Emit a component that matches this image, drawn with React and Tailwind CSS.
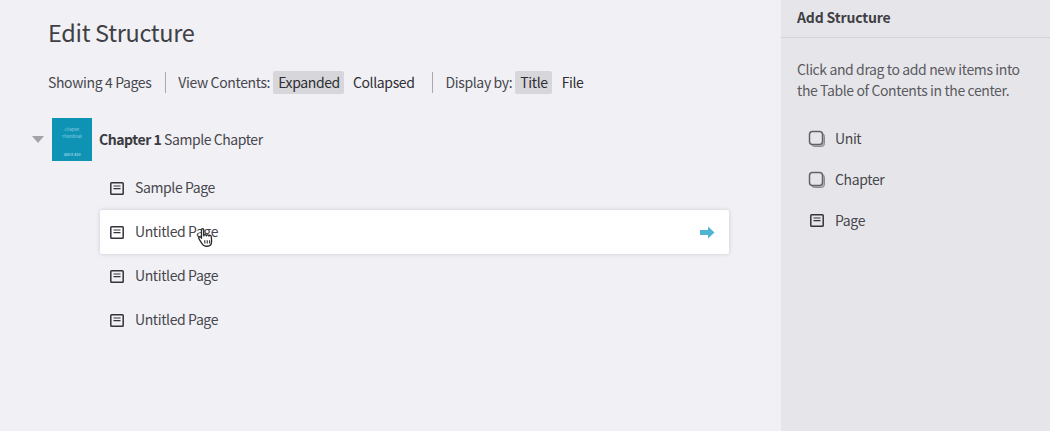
import React from 'react'

function PageIcon() {
    return (
        <svg width="14" height="13" viewBox="0 0 14 13" fill="none" className="shrink-0">
            <rect x="0.8" y="0.8" width="12.4" height="11.4" rx="0.8" stroke="#333338" strokeWidth="1.5" />
            <path d="M3.5 4h7M3.5 6.6h7" stroke="#333338" strokeWidth="1.2" />
        </svg>
    )
}

function StackIcon() {
    return (
        <svg width="18" height="18" viewBox="0 0 18 18" fill="none" className="shrink-0">
            <rect x="3.5" y="3.5" width="13" height="13" rx="3" fill="#b4b4b9" stroke="#8a8a8f" strokeWidth="1" />
            <rect x="1.5" y="1.5" width="13" height="13" rx="3" fill="#e6e6ea" stroke="#626267" strokeWidth="1.5" />
        </svg>
    )
}

function Row({ label, hovered }) {
    return (
        <div className={hovered
            ? 'relative flex h-[44px] items-center rounded-[2px] bg-white pl-[10px] pr-[15px] shadow-[0_0_4px_rgba(0,0,0,0.16)]'
            : 'relative flex h-[44px] items-center pl-[10px] pr-[15px]'}>
            <PageIcon />
            <span className="ml-[11px] mb-[1px] text-[14px] tracking-[-0.39px] text-[#47474d]">{label}</span>
            {hovered && (
                <>
                    <svg width="15" height="13" viewBox="0 0 15 13" className="ml-auto translate-x-[1px]">
                        <path d="M0 4h8V0.5L14.5 6.5 8 12.5V9H0z" fill="#4fb5d3" />
                    </svg>
                    <svg width="20" height="22" viewBox="0 0 18 20" className="absolute left-[97px] top-[17px]" fill="#fff" stroke="#2c2c30" strokeWidth="1.2" strokeLinejoin="round">
                        <path d="M4 2.5c0-1.4 2-1.4 2 0V8c.2-1.4 2.3-1.3 2.4 0 .2-1.2 2.2-1.1 2.3.2.3-1 2.1-.9 2.2.4l.3 4.4c0 2.5-1.5 4.5-4 4.5H8c-1.8 0-2.8-1-3.6-2.3L1.6 10.6c-.7-1.2.9-2.2 1.8-1.2L4 10.2z" />
                        <path d="M7 12v3M9.2 12v3M11.4 12v3" fill="none" strokeWidth="1" />
                    </svg>
                </>
            )}
        </div>
    )
}

function Tool({ icon, label }) {
    return (
        <div className="flex h-[41px] items-center">
            <div className="flex w-[18px] justify-center">{icon}</div>
            <span className="ml-[9px] text-[14px] tracking-[-0.37px] text-[#47474d]">{label}</span>
        </div>
    )
}

export default function App() {
    return (
        <div className="flex h-[431px] w-[1050px] overflow-hidden bg-[#f0f0f5] font-['Noto_Sans_CJK_SC',sans-serif] antialiased">
            <div className="w-[781px] shrink-0 pt-[16px]">
                <h1 className="ml-[48px] text-[23.5px] leading-[32px] font-normal tracking-[-0.33px] text-[#3f3f45]">Edit Structure</h1>

                <div className="ml-[48px] mt-[18px] flex h-[32px] items-center text-[14px] tracking-[-0.37px] text-[#47474d]">
                    <span>Showing 4 Pages</span>
                    <div className="ml-[14px] h-[21px] w-px bg-[#a9a9ae]"></div>
                    <span className="ml-[12px]">View Contents:</span>
                    <span className="ml-[3px] rounded-[2px] bg-[#d7d7db] pl-[5px] pr-[4px] leading-[23px] text-[#2e2e33]">Expanded</span>
                    <span className="ml-[4px] px-[5px] text-[#2e2e33]">Collapsed</span>
                    <div className="ml-[12px] h-[21px] w-px bg-[#a9a9ae]"></div>
                    <span className="ml-[13px]">Display by:</span>
                    <span className="ml-[3px] rounded-[2px] bg-[#d7d7db] pl-[5px] pr-[4px] leading-[23px] text-[#2e2e33]">Title</span>
                    <span className="ml-[5px] px-[5px] text-[#2e2e33]">File</span>
                </div>

                <div className="mt-[20px] flex h-[43px] items-center">
                    <div className="ml-[32px] h-0 w-0 border-x-[6px] border-t-[7px] border-x-transparent border-t-[#a3a3a8]"></div>
                    <div className="ml-[8px] flex h-[43px] w-[40px] flex-col items-center bg-[#0e93b4] pt-[8px] text-[4px] leading-[7px] text-[#8fd2e2]">
                        <span>Chapter</span>
                        <span>Thumbnail</span>
                        <span className="mt-auto mb-[3px] text-[#cdeaf2]">300 x 410</span>
                    </div>
                    <div className="ml-[7px] text-[14px] tracking-[-0.44px] text-[#47474d]">
                        <span className="font-bold text-[#3a3a40]">Chapter 1</span> Sample Chapter
                    </div>
                </div>

                <div className="ml-[100px] mt-[5px] w-[629px]">
                    <Row label="Sample Page" />
                    <Row label="Untitled Page" hovered />
                    <Row label="Untitled Page" />
                    <Row label="Untitled Page" />
                </div>
            </div>

            <div className="flex-1 bg-[#e6e6ea]">
                <div className="flex h-[38px] items-center border-b border-[#d3d3d8] pb-[2px] pl-[16px] text-[14px] font-bold tracking-[-0.15px] text-[#3f3f45]">Add Structure</div>
                <p className="mx-[16px] mt-[21px] text-[14px] leading-[21px] tracking-[-0.39px] text-[#5a5a60]">
                    Click and drag to add new items into the Table of Contents in the center.
                </p>
                <div className="ml-[27px] mt-[17px]">
                    <Tool icon={<StackIcon />} label="Unit" />
                    <Tool icon={<StackIcon />} label="Chapter" />
                    <Tool icon={<PageIcon />} label="Page" />
                </div>
            </div>
        </div>
    )
}
